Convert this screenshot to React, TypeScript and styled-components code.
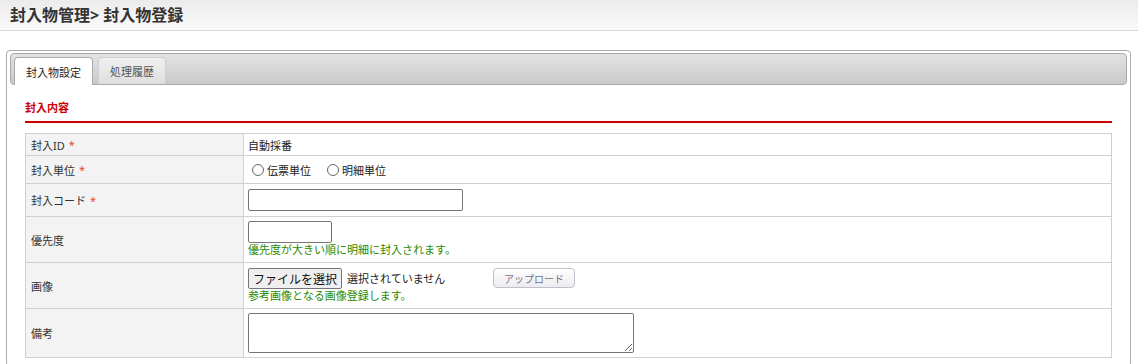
import styled, { createGlobalStyle } from 'styled-components';

// style
const GlobalStyle = createGlobalStyle`
  body {
    margin: 0;
    background: #fff;
    color: #333;
    font-family: "Noto Sans", "Noto Sans CJK JP", sans-serif;
    font-size: 11px;
  }
`;
const Header = styled.div`
  height: 30px;
  display: flex;
  align-items: center;
  padding-left: 10px;
  background: linear-gradient(#ebebeb, #fafafa);
  border-bottom: 1px solid #d6d6de;
`;
const PageTitle = styled.h1`
  margin: 0;
  font-size: 16px;
  font-weight: bold;
  color: #333;
  line-height: 20px;
`;
const Panel = styled.div`
  margin: 19px 7px 0 6px;
  padding: 2px 3px 8px;
  border: 1px solid #aaa;
  border-radius: 4px;
`;
const TabBar = styled.div`
  height: 30px;
  display: flex;
  align-items: flex-end;
  gap: 5px;
  padding-left: 3px;
  border: 1px solid #aaa;
  border-radius: 4px;
  background: linear-gradient(#e3e3e3, #c9c9c9);
`;
const Tab = styled.div<{ active?: boolean }>`
  height: ${(p) => (p.active ? 28 : 27)}px;
  margin-bottom: ${(p) => (p.active ? -1 : 0)}px;
  box-sizing: border-box;
  padding: 0 11px;
  display: flex;
  align-items: center;
  border: 1px solid ${(p) => (p.active ? '#aaa' : '#cfcfcf')};
  border-bottom: none;
  border-radius: 4px 4px 0 0;
  background: ${(p) => (p.active ? '#fff' : 'linear-gradient(#f0f0f0, #dedede)')};
  color: ${(p) => (p.active ? '#222' : '#555')};
  font-size: 11px;
`;
const Body = styled.div`
  padding: 15px 15px 0;
`;
const SectionTitle = styled.h2`
  margin: 0;
  padding-bottom: 5px;
  font-size: 11px;
  font-weight: bold;
  line-height: 16px;
  color: #c00;
  border-bottom: 2px solid #c00;
`;
const FormTable = styled.div`
  margin-top: 10px;
  border-top: 1px solid #d0d0d0;
  border-left: 1px solid #d0d0d0;
`;
const Row = styled.div<{ h: number }>`
  display: grid;
  grid-template-columns: 218px 1fr;
  height: ${(p) => p.h}px;
`;
const Label = styled.div`
  display: flex;
  align-items: center;
  padding-left: 5px;
  background: #f2f3f2;
  border-right: 1px solid #d0d0d0;
  border-bottom: 1px solid #d0d0d0;
  color: #333;
`;
const Req = styled.span`
  color: #e43;
  margin-left: 4px;
`;
const Value = styled.div<{ top?: boolean }>`
  display: flex;
  flex-direction: column;
  justify-content: ${(p) => (p.top ? 'flex-start' : 'center')};
  align-items: flex-start;
  padding: ${(p) => (p.top ? '4px' : '0')} 0 0 4px;
  border-right: 1px solid #d0d0d0;
  border-bottom: 1px solid #d0d0d0;
  color: #222;
`;
const Line = styled.div`
  display: flex;
  align-items: center;
`;
const RadioLabel = styled.label`
  display: flex;
  align-items: center;
  margin-right: 12px;
`;
const Radio = styled.input`
  appearance: none;
  width: 12px;
  height: 12px;
  margin: 0 3px 0 4px;
  border: 1px solid #666;
  border-radius: 50%;
  background: #fff;
`;
const TextInput = styled.input<{ w: number }>`
  width: ${(p) => p.w}px;
  height: 22px;
  box-sizing: border-box;
  margin: 0;
  border: 1px solid #767676;
  border-radius: 2px;
`;
const Hint = styled.div`
  color: #2a8a00;
  line-height: 13px;
`;
const FileButton = styled.button`
  height: 21px;
  padding: 0 4px;
  margin: 1px 5px 0 0;
  border: 1px solid #767676;
  border-radius: 2px;
  background: #efefef;
  color: #111;
  font-family: inherit;
  font-size: 12px;
`;
const FileName = styled.span`
  width: 146px;
  font-size: 11px;
  color: #222;
`;
const UploadButton = styled.button`
  height: 20px;
  width: 82px;
  padding: 0;
  border: 1px solid #c0c0cc;
  border-radius: 4px;
  background: linear-gradient(#fff, #ececf0);
  color: #707088;
  font-family: inherit;
  font-size: 10px;
`;
const Memo = styled.textarea`
  width: 386px;
  height: 40px;
  box-sizing: border-box;
  margin: 0;
  border: 1px solid #767676;
  border-radius: 2px;
`;

function App() {
  return (
    <>
      <GlobalStyle />
      <Header>
        <PageTitle>封入物管理&gt; 封入物登録</PageTitle>
      </Header>
      <Panel>
        <TabBar>
          <Tab active>封入物設定</Tab>
          <Tab>処理履歴</Tab>
        </TabBar>
        <Body>
          <SectionTitle>封入内容</SectionTitle>
          <FormTable>
            <Row h={22}>
              <Label>
                封入ID<Req>*</Req>
              </Label>
              <Value>自動採番</Value>
            </Row>
            <Row h={28}>
              <Label>
                封入単位<Req>*</Req>
              </Label>
              <Value>
                <Line>
                  <RadioLabel>
                    <Radio type="radio" name="unit" />
                    伝票単位
                  </RadioLabel>
                  <RadioLabel>
                    <Radio type="radio" name="unit" />
                    明細単位
                  </RadioLabel>
                </Line>
              </Value>
            </Row>
            <Row h={33}>
              <Label>
                封入コード<Req>*</Req>
              </Label>
              <Value>
                <TextInput w={215} />
              </Value>
            </Row>
            <Row h={46}>
              <Label>優先度</Label>
              <Value top>
                <TextInput w={84} />
                <Hint>優先度が大きい順に明細に封入されます。</Hint>
              </Value>
            </Row>
            <Row h={46}>
              <Label>画像</Label>
              <Value top>
                <Line>
                  <FileButton>ファイルを選択</FileButton>
                  <FileName>選択されていません</FileName>
                  <UploadButton>アップロード</UploadButton>
                </Line>
                <Hint>参考画像となる画像登録します。</Hint>
              </Value>
            </Row>
            <Row h={49}>
              <Label>備考</Label>
              <Value top>
                <Memo />
              </Value>
            </Row>
          </FormTable>
        </Body>
      </Panel>
    </>
  );
}

export default App;
